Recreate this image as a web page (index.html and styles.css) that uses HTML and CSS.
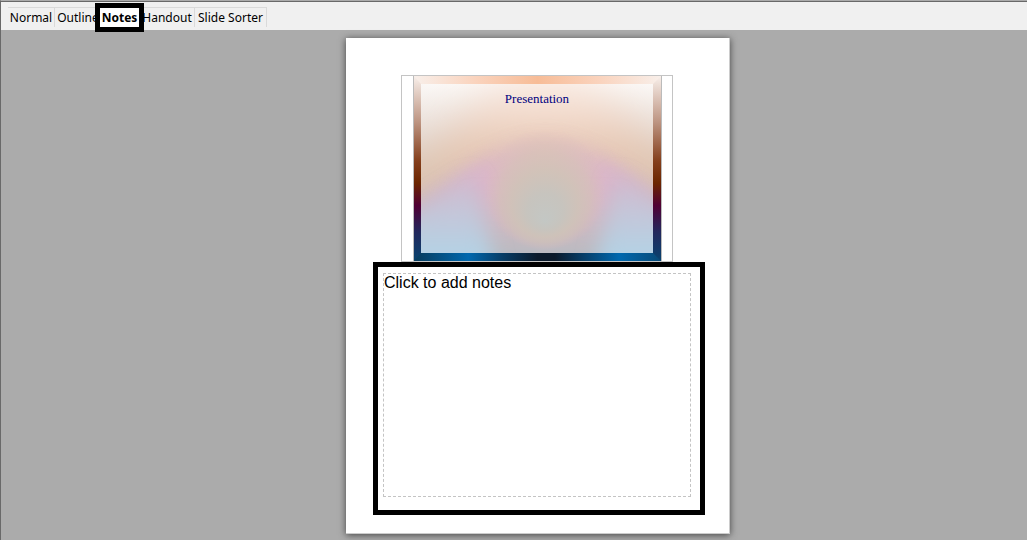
FILE: index.html
```html
<!DOCTYPE html>
<html lang="en">
<head>
<meta charset="utf-8">
<title>Presentation - Notes</title>
<link rel="stylesheet" href="styles.css">
</head>
<body>
<div class="app">
  <nav class="tabs" role="tablist" aria-label="Views">
    <button class="tab tab-normal" role="tab">Normal</button>
    <button class="tab tab-outline" role="tab">Outline</button>
    <button class="tab active" role="tab" aria-selected="true">Notes</button>
    <button class="tab tab-handout" role="tab">Handout</button>
    <button class="tab tab-sorter" role="tab">Slide Sorter</button>
  </nav>
  <main class="workspace">
    <article class="page">
      <section class="slide-frame">
        <div class="slide">
          <svg class="art" viewBox="0 0 247 186" preserveAspectRatio="none" aria-hidden="true">
            <defs>
              <linearGradient id="edge" x1="0" y1="0" x2="0" y2="1">
                <stop offset="0" stop-color="#f8efea"/>
                <stop offset=".25" stop-color="#bd9481"/>
                <stop offset=".46" stop-color="#843f1c"/>
                <stop offset=".58" stop-color="#6b2500"/>
                <stop offset=".7" stop-color="#500034"/>
                <stop offset=".84" stop-color="#23275c"/>
                <stop offset="1" stop-color="#07436f"/>
              </linearGradient>
              <linearGradient id="top" x1="0" x2="1">
                <stop offset="0" stop-color="#f8efea"/>
                <stop offset=".25" stop-color="#fad3bd"/>
                <stop offset=".5" stop-color="#f7bc97"/>
                <stop offset=".75" stop-color="#fad3bd"/>
                <stop offset="1" stop-color="#f8efea"/>
              </linearGradient>
              <linearGradient id="bottom" x1="0" x2="1">
                <stop offset="0" stop-color="#083b5b"/>
                <stop offset=".22" stop-color="#0068ae"/>
                <stop offset=".36" stop-color="#073c65"/>
                <stop offset=".5" stop-color="#0b1a2b"/>
                <stop offset=".57" stop-color="#0b1a2b"/>
                <stop offset=".68" stop-color="#073c65"/>
                <stop offset=".83" stop-color="#0068ae"/>
                <stop offset="1" stop-color="#084a77"/>
              </linearGradient>
              <linearGradient id="sky" x1="0" y1="0" x2="0" y2="1">
                <stop offset="0" stop-color="#fbf8f6"/>
                <stop offset=".3" stop-color="#e7ddd6"/>
                <stop offset=".58" stop-color="#d9c5b4"/>
                <stop offset="1" stop-color="#d3bcb8"/>
              </linearGradient>
              <linearGradient id="warm" gradientUnits="userSpaceOnUse" x1="0" y1="0" x2="0" y2="130">
                <stop offset="0" stop-color="#fdf0e8"/>
                <stop offset=".3" stop-color="#f3dbcd"/>
                <stop offset=".55" stop-color="#e6c7b3"/>
                <stop offset="1" stop-color="#d8c3b0"/>
              </linearGradient>
              <linearGradient id="arch" gradientUnits="userSpaceOnUse" x1="7" y1="0" x2="255" y2="0">
                <stop offset="0" stop-color="#cdb5c4"/>
                <stop offset=".22" stop-color="#d9b4cb"/>
                <stop offset=".5" stop-color="#e1c1bb"/>
                <stop offset=".77" stop-color="#d9b4cb"/>
                <stop offset="1" stop-color="#cdb5c4"/>
              </linearGradient>
              <radialGradient id="dome" gradientUnits="userSpaceOnUse" cx="131" cy="114" r="61" fx="131" fy="146">
                <stop offset="0" stop-color="#c3c7c4"/>
                <stop offset=".3" stop-color="#c7c4be"/>
                <stop offset=".55" stop-color="#cfc3b8" stop-opacity=".85"/>
                <stop offset=".75" stop-color="#d3c1b8" stop-opacity=".55"/>
                <stop offset="1" stop-color="#dabac0" stop-opacity="0"/>
              </radialGradient>
              <linearGradient id="floor" gradientUnits="userSpaceOnUse" x1="0" y1="110" x2="0" y2="178">
                <stop offset="0" stop-color="#cdb9c0" stop-opacity="0"/>
                <stop offset="1" stop-color="#b9bac1"/>
              </linearGradient>
              <linearGradient id="blue" gradientUnits="userSpaceOnUse" x1="0" y1="95" x2="0" y2="178">
                <stop offset="0" stop-color="#cbc0d6" stop-opacity=".5"/>
                <stop offset=".5" stop-color="#c2c9dc" stop-opacity=".85"/>
                <stop offset="1" stop-color="#b4d2e5"/>
              </linearGradient>
              <filter id="soft" filterUnits="userSpaceOnUse" x="-60" y="-40" width="370" height="320"><feGaussianBlur stdDeviation="6"/></filter>
              <filter id="haze" filterUnits="userSpaceOnUse" x="-80" y="-60" width="420" height="380"><feGaussianBlur stdDeviation="10"/></filter>
              <filter id="wide" filterUnits="userSpaceOnUse" x="-120" y="-100" width="500" height="460"><feGaussianBlur stdDeviation="20"/></filter>
              <clipPath id="panel"><rect x="7" y="8" width="232" height="170"/></clipPath>
            </defs>
            <rect width="247" height="186" fill="url(#edge)"/>
            <path d="M0 0H247L239 8H7Z" fill="url(#top)"/>
            <path d="M7 178H239L247 186H0Z" fill="url(#bottom)"/>
            <g clip-path="url(#panel)">
              <rect x="7" y="8" width="232" height="170" fill="url(#sky)"/>
              <path d="M-50 140C10 105 60 -5 131 -5S245 95 310 130V230H-50Z" fill="url(#warm)" filter="url(#wide)"/>
              <path d="M-30 145C20 115 80 65 131 65S240 115 290 145V230H-30Z" fill="url(#arch)" opacity=".9" filter="url(#haze)"/>
              <path d="M-30 158C30 122 60 85 76 85C90 100 76 145 110 190H-30Z" fill="url(#arch)" opacity=".5" filter="url(#soft)"/>
              <path d="M290 158C232 122 202 85 186 85C172 100 186 145 152 190H290Z" fill="url(#arch)" opacity=".5" filter="url(#soft)"/>
              <rect x="50" y="110" width="162" height="100" fill="url(#floor)" filter="url(#soft)"/>
              <g filter="url(#haze)" fill="url(#blue)">
                <path d="M60 100L88 225H-30V155Z"/>
                <path d="M202 100L174 225H285V155Z"/>
              </g>
              <rect x="7" y="8" width="232" height="170" fill="url(#dome)"/>
            </g>
          </svg>
          <h1 class="slide-title">Presentation</h1>
        </div>
      </section>
      <section class="notes">
        <textarea class="notes-text" aria-label="Notes" placeholder="Click to add notes"></textarea>
      </section>
    </article>
  </main>
</div>
</body>
</html>
```
FILE: styles.css
```css
* { box-sizing: border-box; }
body { margin: 0; font-family: "Open Sans", "Noto Sans", sans-serif; }
.app {
  min-height: 100vh;
  display: flex;
  flex-direction: column;
  background: #ababab;
  border-top: 1px solid #ababab;
  border-left: 1px solid #696969;
}
.tabs {
  display: flex;
  align-items: stretch;
  height: 29px;
  padding: 5px 0 3px 7px;
  background: #f0f0f0;
  border-top: 1px solid #696969;
}
.tab {
  height: 20px;
  margin: 0;
  padding: 0;
  border: 0;
  border-top: 1px solid #dadada;
  border-right: 1px solid #dadada;
  background: transparent;
  color: #000;
  font: 12px/20px "Noto Sans", sans-serif;
  white-space: nowrap;
}
.tab-normal { width: 47px; }
.tab-outline { width: 47px; }
.tab-handout { width: 55px; }
.tab-sorter { width: 72px; }
.tab.active {
  position: relative;
  z-index: 1;
  width: 49px;
  height: 29px;
  margin: -4px -4px 0 -7px;
  border: 5px solid #000;
  background: #fff;
  font-weight: 700;
  line-height: 18px;
}
.workspace {
  flex: 1;
  display: flex;
  justify-content: center;
  align-items: flex-start;
  padding: 8px 0 6px 48px;
}
.page {
  display: flex;
  flex-direction: column;
  width: 384px;
  padding: 37px 24px 18px 27px;
  background: #fff;
  border-right: 1px solid #ccc;
  border-bottom: 1px solid #ccc;
  box-shadow: 0 1px 7px #444;
}
.slide-frame {
  display: flex;
  justify-content: center;
  margin: 0 32px 0 28px;
  border: 1px solid #c4c4c4;
}
.slide {
  display: grid;
  width: 249px;
  height: 185px;
  border-left: 1px solid #bbb;
  border-right: 1px solid #bbb;
}
.art, .slide-title { grid-area: 1 / 1; }
.art { width: 100%; height: 100%; }
.slide-title {
  margin: 14px 0 0;
  color: #000080;
  font: 13px/18px "Liberation Serif", serif;
  text-align: center;
}
.notes {
  height: 253px;
  padding: 6px 9px 13px 5px;
  border: 5px solid #000;
}
.notes-text {
  display: block;
  width: 100%;
  height: 100%;
  padding: 0;
  border: 1px dashed #c4c4c4;
  outline: 0;
  resize: none;
  background: transparent;
  color: #000;
  font: 16px/18px "Liberation Sans", sans-serif;
}
.notes-text::placeholder { color: #000; opacity: 1; }
```
